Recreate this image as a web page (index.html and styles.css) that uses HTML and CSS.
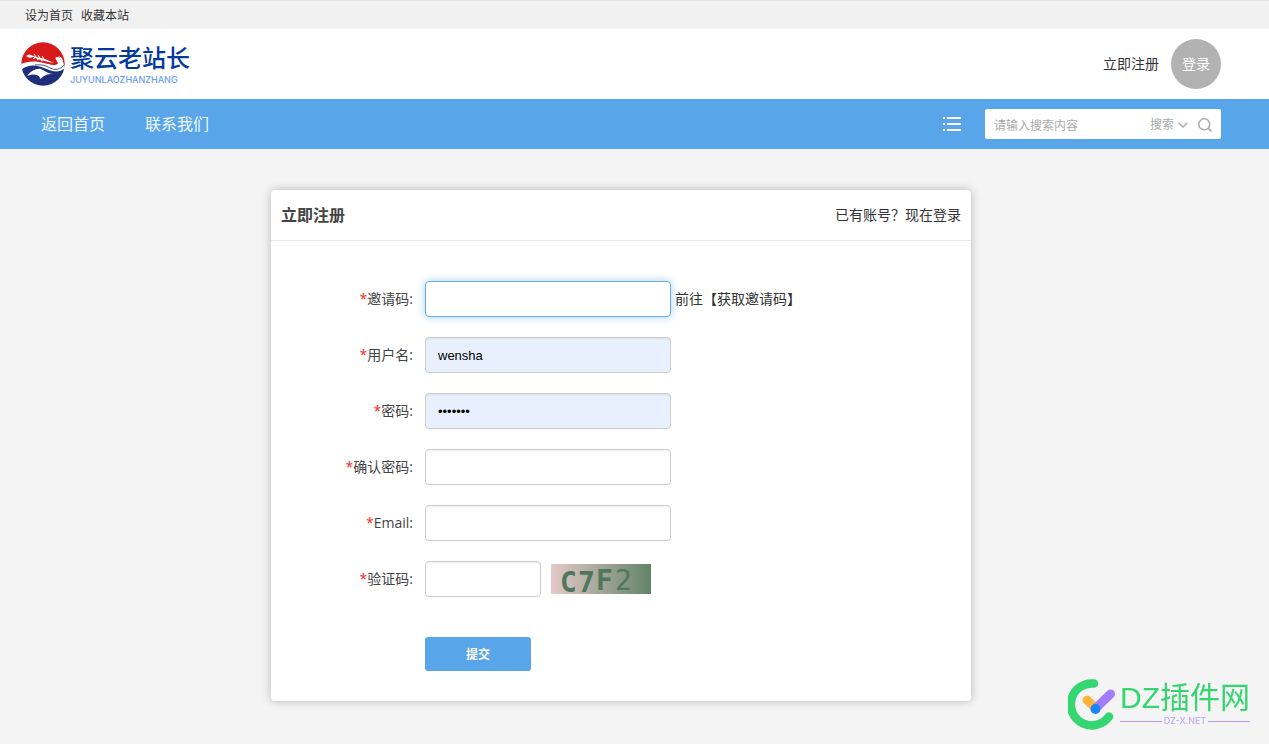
FILE: index.html
```
<!DOCTYPE html>
<html lang="zh-CN">
<head>
<meta charset="utf-8">
<title>立即注册</title>
<link rel="stylesheet" href="styles.css">
</head>
<body>
<div class="topbar">
  <div class="wrap topbar-links">
    <a href="#">设为首页</a>
    <a href="#">收藏本站</a>
  </div>
</div>
<header class="header">
  <div class="wrap header-inner">
    <a class="logo" href="#">
      <svg class="logo-mark" viewBox="0 0 44 44" aria-hidden="true">
        <defs><clipPath id="disc"><circle cx="22" cy="22" r="21.700"/></clipPath></defs>
        <g clip-path="url(#disc)">
          <rect width="44" height="44" fill="#fff"/>
          <path d="M0 0H44V27C43 21 41 15 36 15C32 15 37 19 37 22C33 25 25 21 18 20C10 19 5 20 0 22Z" fill="#d91a1a"/>
          <path d="M0 28C8 22 15 23 23 26C31 29 37 32 44 26V44H0Z" fill="#1d2e7d"/>
          <path d="M6 34C10 29 15 26 20 27C25 30 29 32 33 32C29 32 26 32 25 33C22 34 21 36 19 37C19 34 17 33 15 33C12 32 9 33 6 34Z" fill="#fff"/>
          <path d="M5 14Q8 11 12 14L24 17L33 21Q21 19 12 15Q8 17 5 14Z" fill="#fff"/>
          <path d="M13 12l2 3-3 2M17 13l2 3-3 2M21 14l2 3-3 2" fill="none" stroke="#fff" stroke-width="1"/>
          <path d="M37 14Q41 16 38 21Q34 25 27 22L25 24Q36 30 42 23Q43 15 37 14Z" fill="#fff"/>
          <path d="M14 23Q23 22 29 26Q37 30 43 23" fill="none" stroke="#1d2e7d" stroke-width=".8"/>
        </g>
      </svg>
      <span class="logo-text">
        <span class="logo-name">聚云老站长</span>
        <span class="logo-latin">JUYUNLAOZHANZHANG</span>
      </span>
    </a>
    <div class="account">
      <a href="#">立即注册</a>
      <a class="login" href="#">登录</a>
    </div>
  </div>
</header>
<nav class="nav">
  <div class="wrap nav-inner">
    <div class="nav-links">
      <a href="#">返回首页</a>
      <a href="#">联系我们</a>
    </div>
    <button class="menu" type="button" aria-label="菜单">
      <svg width="18" height="14" viewBox="0 0 18 14" fill="#fff" aria-hidden="true"><path d="M0 0h2v2H0zM4 0h14v2H4zM0 6h2v2H0zM4 6h14v2H4zM0 12h2v2H0zM4 12h14v2H4z"/></svg>
    </button>
    <form class="search">
      <input class="search-text" type="text" placeholder="请输入搜索内容" aria-label="搜索内容">
      <button class="search-type" type="button">搜索
        <svg width="10" height="6" viewBox="0 0 10 6" aria-hidden="true"><path d="M.7.7L5 5 9.300.7" fill="none" stroke="#aaa" stroke-width="1.300"/></svg>
      </button>
      <button class="search-go" type="submit" aria-label="提交搜索">
        <svg width="14" height="14" viewBox="0 0 14 14" aria-hidden="true"><circle cx="6.300" cy="6.300" r="5.500" fill="none" stroke="#aaa" stroke-width="1.500"/><path d="M10.300 10.300L13.500 13.500" stroke="#aaa" stroke-width="1.700"/></svg>
      </button>
    </form>
  </div>
</nav>
<main class="wrap">
  <section class="card">
    <div class="card-head">
      <h1>立即注册</h1>
      <a href="#">已有账号？现在登录</a>
    </div>
    <form class="form">
      <div class="row">
        <label for="invite"><span class="req">*</span>邀请码:</label>
        <input class="field focused" id="invite" type="text">
        <a class="hint" href="#">前往【获取邀请码】</a>
      </div>
      <div class="row">
        <label for="user"><span class="req">*</span>用户名:</label>
        <input class="field filled" id="user" type="text" value="wensha">
      </div>
      <div class="row">
        <label for="pass"><span class="req">*</span>密码:</label>
        <input class="field filled" id="pass" type="password" value="1234567">
      </div>
      <div class="row">
        <label for="pass2"><span class="req">*</span>确认密码:</label>
        <input class="field" id="pass2" type="password">
      </div>
      <div class="row">
        <label for="email"><span class="req">*</span>Email:</label>
        <input class="field" id="email" type="text">
      </div>
      <div class="row">
        <label for="code"><span class="req">*</span>验证码:</label>
        <input class="field short" id="code" type="text">
        <svg class="captcha" width="100" height="30" viewBox="0 0 100 30" role="img" aria-label="验证码图片">
          <defs><linearGradient id="shade"><stop offset="0" stop-color="#e4cbc8"/><stop offset=".5" stop-color="#a5a598"/><stop offset="1" stop-color="#628468"/></linearGradient></defs>
          <rect width="100" height="30" fill="url(#shade)"/>
          <g class="captcha-text">
            <text class="heavy" x="9" y="28">C</text>
            <text class="heavy" x="27" y="28">7</text>
            <text class="heavy" x="45" y="26">F</text>
            <text class="light" x="64" y="26">2</text>
          </g>
        </svg>
      </div>
      <button class="submit" type="submit">提交</button>
    </form>
  </section>
</main>
<div class="badge">
  <svg class="badge-mark" width="48" height="52" viewBox="0 0 48 52" aria-hidden="true">
    <path d="M26 5.500A21 21 0 1 0 41 38.500" fill="none" stroke="#33d671" stroke-width="8.500" stroke-linecap="round"/>
    <path d="M19 22L27.500 30" stroke="#ffb43b" stroke-width="9" stroke-linecap="round"/>
    <path d="M28 30L42.500 16" stroke="#a27dff" stroke-width="9" stroke-linecap="round"/>
    <circle cx="27.500" cy="31" r="5" fill="#1685ff"/>
  </svg>
  <div class="badge-text">
    <span class="badge-name">DZ插件网</span>
    <span class="badge-site">DZ-X.NET</span>
  </div>
</div>
</body>
</html>
```
FILE: styles.css
```
* { box-sizing: border-box; }
body {
  margin: 0;
  min-height: 100vh;
  background: #f4f4f4;
  color: #333;
  font: 14px/20px "Open Sans", "Noto Sans CJK SC", sans-serif;
}
a { color: inherit; text-decoration: none; }
input, button { font: inherit; margin: 0; }
button { padding: 0; border: 0; background: none; cursor: pointer; }
svg { display: block; flex: none; }
.topbar, .header, .nav { padding-right: 27px; }
main { padding-right: 27px; }
.wrap { max-width: 1200px; margin: 0 auto; }
.topbar { background: #f1f1f1; border-top: 1px solid #e4e4e4; }
.topbar-links { display: flex; gap: 8px; padding: 2px 4px 0; font-size: 12px; line-height: 26px; }
.header { background: #fff; }
.header-inner { display: flex; justify-content: space-between; align-items: center; height: 70px; }
.logo { display: flex; align-items: center; gap: 5px; }
.logo-mark { width: 44px; height: 44px; }
.logo-text { display: flex; flex-direction: column; }
.logo-name { font-size: 24px; line-height: 32px; font-weight: 500; color: #023a9c; }
.logo-latin { font: 500 9px/12px Inter, sans-serif; color: #6c9df8; }
.account { display: flex; align-items: center; gap: 12px; }
.login { width: 50px; line-height: 50px; border-radius: 50%; background: #b2b2b2; color: #fff; text-align: center; }
.nav { background: #58a6e9; }
.nav-inner { display: flex; align-items: center; height: 50px; }
.nav-links { flex: 1; display: flex; gap: 40px; padding-left: 20px; font-size: 16px; color: #eef6fd; }
.menu { margin-right: 24px; }
.search { display: flex; align-items: center; width: 236px; height: 30px; padding: 2px 9px 0; border-radius: 2px; background: #fff; font-size: 12px; color: #aaa; }
.search-text { flex: 1; min-width: 0; padding: 2px 0 0; border: 0; outline: 0; background: none; }
.search-text::placeholder { color: #aaa; opacity: 1; }
.search-type { display: flex; align-items: center; gap: 4px; margin-right: 10px; color: #aaa; }
main.wrap { max-width: 1227px; }
.card { max-width: 700px; margin: 41px auto 40px; border-radius: 4px; background: #fff; box-shadow: 0 0 10px rgba(0, 0, 0, .25); }
.card-head { display: flex; justify-content: space-between; align-items: center; height: 51px; padding: 0 10px; border-bottom: 1px solid #e9e9e9; }
h1 { margin: 0; font-size: 16px; line-height: 24px; font-weight: 600; color: #444; }
.form { display: flex; flex-direction: column; gap: 20px; padding: 40px 0 30px; }
.row { display: flex; align-items: center; }
label { width: 142px; margin-right: 12px; text-align: right; color: #444; }
.req { color: #f22; }
.field { width: 246px; height: 36px; padding: 0 12px; border: 1px solid #ccc; border-radius: 4px; background: #fff; color: #000; outline: 0; font: 13px/20px "Liberation Sans", sans-serif; box-shadow: inset 0 1px 1px rgba(0, 0, 0, .07); }
.focused { border-color: #66afe9; box-shadow: 0 0 8px rgba(102, 175, 233, .6); }
.filled { background: #e8f0fe; }
.short { width: 116px; }
.hint { margin-left: 4px; }
.captcha { margin-left: 10px; overflow: visible; }
.captcha-text { fill: #50775c; font: 28px "DejaVu Sans Mono", monospace; }
.captcha-text .heavy { font-weight: 700; }
.submit { width: 106px; height: 34px; margin: 20px 0 0 154px; padding-top: 2px; border-radius: 3px; background: #58a6e9; color: #fff; font-size: 12px; font-weight: 700; }
.badge { position: fixed; right: 19px; bottom: 14px; display: flex; align-items: center; gap: 4px; }
.badge-text { display: flex; flex-direction: column; padding-bottom: 2px; }
.badge-name { font: 30px/36px "Liberation Sans", "Noto Sans CJK SC", sans-serif; color: #33d671; }
.badge-site { display: flex; align-items: center; gap: 2px; font: 9px/10px Inter, sans-serif; color: #baa4f2; }
.badge-site::before, .badge-site::after { content: ""; flex: 1; height: 1px; background: #b79bf8; }
```
